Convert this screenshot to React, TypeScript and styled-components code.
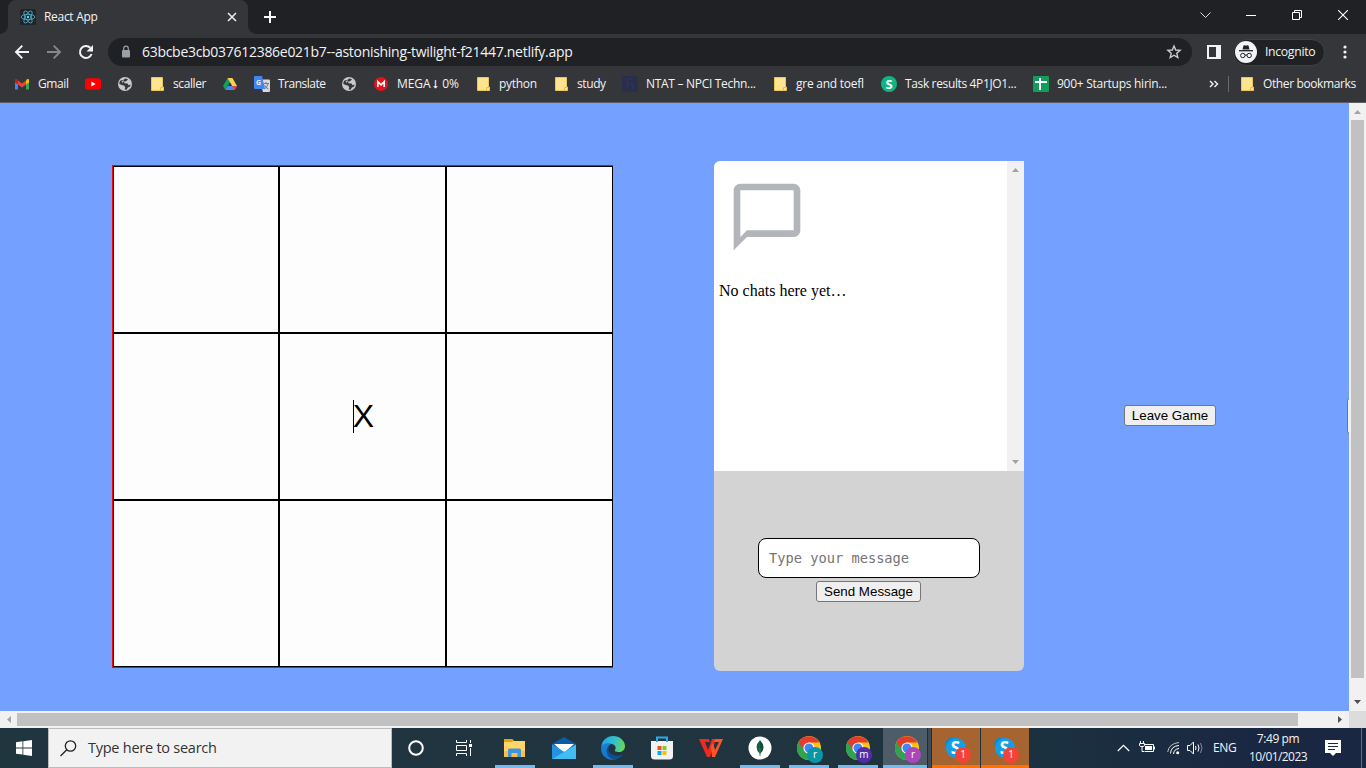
import React from 'react';
import styled, { createGlobalStyle, css } from 'styled-components';

const GlobalStyle = createGlobalStyle`
  * { box-sizing: border-box; }
  body { margin: 0; overflow: hidden; }
  svg { display: block; flex: none; }
`;

const ui = css`font-family: "Open Sans", "Noto Sans", sans-serif;`;

const Screen = styled.div`
  width: 1366px; height: 768px; overflow: hidden;
  display: flex; flex-direction: column;
  ${ui}
`;

/* ---------- browser frame ---------- */
const TabStrip = styled.div`
  height: 34px; background: #202124; display: flex; align-items: stretch; padding-left: 8px; flex: none;
`;
const Tab = styled.div`
  width: 240px; background: #35363a; border-radius: 8px 8px 0 0;
  display: flex; align-items: center; padding: 0 11px 0 12px; position: relative;
  &::before, &::after {
    content: ''; position: absolute; bottom: 0; width: 8px; height: 8px;
  }
  &::before { left: -8px; background: radial-gradient(circle at 0 0, #202124 7.5px, #35363a 8px); }
  &::after { right: -8px; background: radial-gradient(circle at 100% 0, #202124 7.5px, #35363a 8px); }
`;
const Favicon = styled.div`
  width: 16px; height: 16px; background: #20232a; border-radius: 2px; margin-right: 8px;
`;
const Label = styled.span<{ $size?: number; $ls?: number; $w?: number; $ml?: number; $color?: string }>`
  font-size: ${p => p.$size ?? 12}px;
  letter-spacing: ${p => p.$ls ?? -0.3}px;
  ${p => p.$w && `width: ${p.$w}px;`}
  margin-left: ${p => p.$ml ?? 0}px;
  color: ${p => p.$color ?? '#f1f3f4'};
  white-space: nowrap; line-height: 16px; flex: none;
`;
const Grow = styled.div`flex: 1;`;
const NewTab = styled.div`margin-left: 15px; display: flex; align-items: center;`;
const WindowControls = styled.div`
  display: flex; align-items: flex-start; padding-top: 5px;
`;
const WindowControl = styled.div`
  width: 46px; height: 20px; display: flex; align-items: center; justify-content: center;
`;
const Toolbar = styled.div`
  height: 36px; flex: none; background: #35363a; display: flex; align-items: center; padding-left: 14px;
`;
const NavButton = styled.div`width: 32px; height: 20px; display: flex; align-items: center;`;
const AddressBar = styled.div`
  width: 1084px; height: 28px; margin-left: -2px; border-radius: 14px; background: #202124;
  display: flex; align-items: center; padding: 0 10px 0 12px;
`;
const SidePanelIcon = styled.svg`margin-left: 15px;`;
const MenuDots = styled.svg`margin-left: 18px;`;
const Incognito = styled.div`
  width: 92px; height: 27px; border-radius: 14px; background: #202124; border: 1px solid #3f4145;
  display: flex; align-items: center; padding-left: 1px; margin-left: 12px;
`;
const Bookmarks = styled.div`
  height: 33px; flex: none; background: #35363a; border-bottom: 1px solid #5c5e62;
  display: flex; align-items: center; padding: 0 0 4px 14px;
`;
const Bookmark = styled.div<{ $w: number }>`
  width: ${p => p.$w}px; flex: none; display: flex; align-items: center; gap: 8px;
`;
const Divider = styled.div`width: 1px; height: 16px; background: #67696d; margin: 0 10px 0 9px;`;

const FolderIcon = () => (
  <svg width="16" height="16" viewBox="0 0 16 16">
    <path d="M2.5 1.5h11v9.5h1v3.5h-12z" fill="#ffe490" stroke="#e8c658" />
    <path d="M11.5 14.5v-3h2.5" fill="none" stroke="#e8c040" />
  </svg>
);
const GlobeIcon = () => (
  <svg width="16" height="16" viewBox="0 0 16 16">
    <circle cx="8" cy="8" r="7" fill="#c6c9cc" />
    <path d="M3 4.800 6.200 4 8.500 2.500 11 3.200 9.500 5 7 5.800 7.600 7.200 10.500 7.600 11.500 9.200 13.600 8.600 13 10.500 11 11.500 9.500 13.800 7.600 13.600 8.300 11.500 7 9.500 4.500 9 2.200 7.800z" fill="#35363a" />
    <path d="M4.500 5.500 7 4.300 6 7z" fill="#c6c9cc" />
  </svg>
);
const GmailIcon = () => (
  <svg width="16" height="16" viewBox="0 0 16 16">
    <path d="M1 4v9.500h3V6.500z" fill="#4285f4" /><path d="M12 6.500v7h3V4z" fill="#34a853" />
    <path d="M4 4.500v4l4 3 4-3v-4l-4 3z" fill="#ea4335" />
    <path d="M1 4.200v2.200l3 2.200V4.500C2.700 2.500 1 2.800 1 4.200z" fill="#c5221f" />
    <path d="M15 4.200v2.200l-3 2.200V4.500C13.300 2.500 15 2.800 15 4.200z" fill="#fbbc04" />
  </svg>
);
const YoutubeIcon = () => (
  <svg width="16" height="16" viewBox="0 0 16 16">
    <rect y="2.200" width="16" height="11.600" rx="3" fill="#f00" /><path d="M6.400 5.600v4.800l4.200-2.400z" fill="#fff" />
  </svg>
);
const DriveIcon = () => (
  <svg width="16" height="16" viewBox="0 0 16 16">
    <path d="M5.600 2h4.800L8 6.200 3.400 14 1 10z" fill="#12a15d" />
    <path d="M5.600 2h4.800L15 10h-4.800z" fill="#ffcf48" />
    <path d="M5.700 10H15l-2.400 4H3.400z" fill="#4688f4" /><path d="M10.200 10H15l-2.400 4z" fill="#ea4335" />
  </svg>
);
const GlyphText = styled.text`
  font-family: "Open Sans", sans-serif; text-anchor: middle;
`;
const TranslateIcon = () => (
  <svg width="16" height="16" viewBox="0 0 16 16">
    <path d="M5 3.500h10q1 0 1 1V15q0 1-1 1H9z" fill="#d8dadd" />
    <path d="M9.500 7.500h5.500M12 6v1.500M14 8q-1 4-4 5M10.500 9q1 3 4 4" stroke="#727a84" fill="none" />
    <path d="M1 0h7l3 13H1q-1 0-1-1V1q0-1 1-1z" fill="#4285f4" />
    <GlyphText x="4.600" y="8.800" fontSize="7" fontWeight="700" fill="#e8f0fe">G</GlyphText>
  </svg>
);
const MegaIcon = () => (
  <svg width="16" height="16" viewBox="0 0 16 16">
    <circle cx="8" cy="8" r="7" fill="#e1141e" />
    <path d="M4.800 11V5.700L8 8.900l3.200-3.200V11" fill="none" stroke="#fff" strokeWidth="1.600" />
  </svg>
);
const NpciIcon = () => (
  <svg width="16" height="16" viewBox="0 0 16 16">
    <rect width="16" height="16" fill="#292e4a" />
    <path d="M5.500 3v10M5.500 8q5-2 5 1v4M5 3h5" stroke="#2b3562" fill="none" />
  </svg>
);
const TaskIcon = () => (
  <svg width="16" height="16" viewBox="0 0 16 16">
    <circle cx="8" cy="8" r="8" fill="#0fb583" />
    <GlyphText x="8" y="12.600" fontSize="13" fontWeight="700" fill="#fff">S</GlyphText>
  </svg>
);
const SheetIcon = () => (
  <svg width="16" height="16" viewBox="0 0 16 16">
    <rect width="16" height="16" rx="1" fill="#129e5a" />
    <path d="M7 2v12M2 6h12" stroke="#fff" strokeWidth="2" />
  </svg>
);

type BookmarkEntry = { w: number; icon: React.ReactNode; text?: string; ls?: number };
const bookmarks: BookmarkEntry[] = [
  { w: 71, icon: <GmailIcon />, text: 'Gmail', ls: -0.4 },
  { w: 32, icon: <YoutubeIcon /> },
  { w: 32, icon: <GlobeIcon /> },
  { w: 73, icon: <FolderIcon />, text: 'scaller', ls: -0.4 },
  { w: 32, icon: <DriveIcon /> },
  { w: 87, icon: <TranslateIcon />, text: 'Translate', ls: -0.5 },
  { w: 32, icon: <GlobeIcon /> },
  { w: 102, icon: <MegaIcon />, text: 'MEGA ⭣ 0%', ls: -0.1 },
  { w: 78, icon: <FolderIcon />, text: 'python' },
  { w: 69, icon: <FolderIcon />, text: 'study', ls: -0.4 },
  { w: 150, icon: <NpciIcon />, text: 'NTAT – NPCI Techn...' },
  { w: 109, icon: <FolderIcon />, text: 'gre and toefl', ls: -0.25 },
  { w: 152, icon: <TaskIcon />, text: 'Task results 4P1JO1...', ls: -0.36 },
  { w: 176, icon: <SheetIcon />, text: '900+ Startups hirin...', ls: -0.27 },
];

/* ---------- page ---------- */
const Viewport = styled.div`
  height: 625px; flex: none; display: grid; grid-template-columns: 1349px 17px; grid-template-rows: 608px 17px;
`;
const Page = styled.div`background: #74a0ff; overflow: hidden;`;
const Game = styled.div`
  width: 1500px; height: 626px; padding-left: 112px; display: flex; align-items: center;
`;
const Board = styled.div`
  width: 501px; height: 503px; margin-top: 1px; border: 1px solid #f00; border-right: 0;
  display: grid; grid-template-columns: 166px 167px 167px; grid-template-rows: repeat(3, 167px); flex: none;
`;
const Cell = styled.div`
  border: 1px solid #000; background: #fdfdfd; display: flex; align-items: center; justify-content: center;
  font: 32px/32px "Liberation Sans", Arial, sans-serif; color: #000;
`;
const Mark = styled.span`
  height: 33px; border-left: 1px solid #000; margin-left: 2px; display: block; text-indent: -1px;
`;
const Chat = styled.div`
  width: 310px; height: 510px; margin-left: 101px; flex: none; border-radius: 6px 0 6px 6px; overflow: hidden;
`;
const Messages = styled.div`height: 310px; background: #fff; display: flex;`;
const Empty = styled.div`
  flex: 1; padding: 16px 0 0 5px;
  font: 16px/18px "Liberation Serif", "Times New Roman", serif; color: #000;
`;
const BubbleWrap = styled.div`padding: 0 0 25px 8px;`;
const Composer = styled.div`
  height: 200px; background: #d3d3d3; display: flex; flex-direction: column; align-items: center; padding-top: 67px;
`;
const MessageInput = styled.input`
  width: 222px; height: 40px; border: 1px solid #000; border-radius: 8px; background: #fff; padding: 1px 10px; outline: none;
  font: 13.700px "DejaVu Sans Mono", monospace;
  &::placeholder { color: #757575; }
`;
const Button = styled.button<{ $w: number; $h?: number }>`
  width: ${p => p.$w}px; height: ${p => p.$h ?? 21}px; flex: none; padding: 0;
  font: 13.333px "Liberation Sans", Arial, sans-serif; color: #000; white-space: nowrap;
  background: #efefef; border: 1px solid #767676; border-radius: 3px;
`;
const SendButton = styled(Button)`margin: 3px 1px 0 0;`;
const LeaveButton = styled(Button)`margin: 0 0 1px 100px;`;
const NextButton = styled(Button)`margin-left: 131px;`;

const Bar = styled.div<{ $row?: boolean }>`
  background: #f1f1f1; display: flex; flex-direction: ${p => (p.$row ? 'row' : 'column')}; align-items: center;
  ${p => (p.$row ? 'height: 17px;' : 'width: 17px;')}
`;
const ArrowBox = styled.div`width: 17px; height: 17px; display: flex; align-items: center; justify-content: center; flex: none;`;
const Thumb = styled.div<{ $w: number; $h: number }>`
  width: ${p => p.$w}px; height: ${p => p.$h}px; background: #c1c1c1; flex: none;
`;
const Corner = styled.div`background: #dcdcdc;`;
const Arrow = ({ turn, color }: { turn: number; color: string }) => (
  <ArrowBox>
    <svg width="7" height="7" viewBox="0 0 7 7"><path d="M0 6 3.500 2 7 6z" fill={color} transform={`rotate(${turn} 3.5 3.5)`} /></svg>
  </ArrowBox>
);

/* ---------- taskbar ---------- */
const Taskbar = styled.div`
  height: 40px; flex: none; display: flex; background: linear-gradient(90deg, #20363f 0%, #20343f 60%, #1b3040 78%, #1a2742 92%);
`;
const Start = styled.div`width: 48px; display: flex; align-items: center; justify-content: center; padding-bottom: 1px;`;
const Search = styled.div`
  width: 344px; background: #f2f2f2; border: 1px solid #bcbcbc; display: flex; align-items: center; padding: 0 0 0 11px; gap: 11px;
`;
const TaskItem = styled.div<{ $w?: number; $bg?: string; $line?: string; $lineW?: number }>`
  width: ${p => p.$w ?? 49}px; height: 40px; flex: none; background: ${p => p.$bg ?? 'transparent'};
  display: flex; align-items: center; justify-content: center; position: relative;
  ${p => p.$line && css`
    &::after {
      content: ''; position: absolute; bottom: 0; left: 50%; height: 3px; width: ${p.$lineW ?? 40}px;
      margin-left: -${(p.$lineW ?? 40) / 2}px; background: ${p.$line};
    }
  `}
`;
const ActiveItem = styled(TaskItem)`padding-left: 5px;`;
const Badge = styled.div<{ $color: string }>`
  position: absolute; left: 23px; top: 19px; width: 16px; height: 16px; border-radius: 50%;
  background: ${p => p.$color}; color: #fff; font-size: 10px; line-height: 14px; text-align: center;
`;
const StackEdge = styled.div`width: 4px; background: #3c4b56; border-left: 1px solid #1d2d37; margin-right: 1px;`;
const AppGroup = styled.div`display: flex; padding-left: 2px;`;
const Tray = styled.div`display: flex; align-items: center; padding-left: 88px;`;
const TrayIcon = styled.svg<{ $gap: number }>`margin-left: ${p => p.$gap}px;`;
const Clock = styled.div`
  width: 70px; display: flex; flex-direction: column; align-items: center; margin-left: 7px; gap: 2px;
`;
const ShowDesktop = styled.div`width: 1px; background: #62707f; margin-right: 4px;`;

const ChromeIcon = () => (
  <svg width="24" height="24" viewBox="0 0 24 24">
    <circle cx="12" cy="12" r="12" fill="#fbc116" />
    <path d="M12 12 1.600 6A12 12 0 0 0 12 24l5-9z" fill="#31a350" />
    <path d="M1.600 6A12 12 0 0 1 22.400 6.500H12L7 14z" fill="#e33b2e" />
    <circle cx="12" cy="12" r="5.600" fill="#fff" /><circle cx="12" cy="12" r="4.500" fill="#4285f4" />
  </svg>
);
const SkypeIcon = () => (
  <svg width="24" height="24" viewBox="0 0 24 24">
    <circle cx="8" cy="8" r="6.500" fill="#0889d8" /><circle cx="16" cy="16" r="6.500" fill="#0a86d4" />
    <circle cx="12" cy="12" r="10" fill="#149ee8" />
    <GlyphText x="11.500" y="18" fontSize="17" fontWeight="700" fill="#fff">S</GlyphText>
  </svg>
);
const FileExplorerIcon = () => (
  <svg width="24" height="24" viewBox="0 0 24 24">
    <path d="M1 3h8l2 2h11v16H1z" fill="#ffd667" /><path d="M1 3h8l1.500 2L9 6H1z" fill="#e5a50e" />
    <path d="M1 15h21v6H1z" fill="#f6c14a" />
    <path d="M5 21v-7q0-1.500 1.500-1.500h10q1.500 0 1.500 1.500v7h-3.500v-4H8.500v4z" fill="#3f94de" />
  </svg>
);
const MailIcon = () => (
  <svg width="24" height="24" viewBox="0 0 24 24">
    <path d="M0 8 12 1l12 7v4H0z" fill="#0c5ba8" /><path d="M2 8h20l-10 9z" fill="#fff" />
    <path d="M0 8.500v14.500h24z" fill="#30a8ee" /><path d="M24 8.500V23H0z" fill="#42bdf4" />
    <path d="M0 8.500 12 16 0 23z" fill="#2392e0" />
  </svg>
);
const EdgeIcon = () => (
  <svg width="24" height="24" viewBox="0 0 24 24">
    <defs>
      <linearGradient id="edgeTop" x1="0" x2="1" y1=".3" y2=".5"><stop offset="0" stopColor="#2b9fe6" /><stop offset=".5" stopColor="#30bfd4" /><stop offset="1" stopColor="#67d957" /></linearGradient>
      <linearGradient id="edgeLow" x1="0" x2="0" y1="0" y2="1"><stop offset="0" stopColor="#1a80d6" /><stop offset="1" stopColor="#1672c4" /></linearGradient>
    </defs>
    <path d="M.2 11C1 4 6 0 12 0c7 0 12 5 12 10 0 4-3 6-6 6-3.500 0-4.500-1-4-2 1.500-2 .5-5-3-6C6 7 2 8 .2 11z" fill="url(#edgeTop)" />
    <path d="M.2 11C2 7 7 6.500 10 8c-3 1.500-4 6-2 9.500 2 3.500 6 5.500 9 5C10 26-1 22 .2 11z" fill="url(#edgeLow)" />
    <path d="M10 8c-4 3-3 8 1 10.500 4 2 8 1.500 11.500-.5C20 22 15 24 11.500 23 4 20.500 4 10.500 10 8z" fill="#0d4f94" />
  </svg>
);
const StoreIcon = () => (
  <svg width="24" height="24" viewBox="0 0 24 24">
    <path d="M1 5h22v15q0 3.500-3.500 3.500h-15Q1 23.500 1 20z" fill="#f2f2f2" />
    <path d="M7 6V1.500h10V6" fill="none" stroke="#28aae9" strokeWidth="2" />
    <path d="M7.500 10h4v4h-4z" fill="#f1511b" /><path d="M12.500 10h4v4h-4z" fill="#80cc28" />
    <path d="M7.500 15h4v4h-4z" fill="#00adef" /><path d="M12.500 15h4v4h-4z" fill="#fbbc09" />
  </svg>
);
const WpsIcon = () => (
  <svg width="24" height="24" viewBox="0 0 24 24">
    <path d="M0 3h10l1 3H6l3 8 4-11h4l-6 18H8z" fill="#f3291d" />
    <path d="M12 10l2-3 2 7 4-8h-5l1-3h8l-8 18h-3z" fill="#ff5429" />
  </svg>
);
const MongoIcon = () => (
  <svg width="24" height="24" viewBox="0 0 24 24">
    <circle cx="12" cy="12" r="11.500" fill="#fff" />
    <path d="M12 4q-7 7.500 0 14z" fill="#116149" /><path d="M12 4q7 7.500 0 14z" fill="#0b4f3a" /><path d="M12 12v8" stroke="#4a7963" />
  </svg>
);

export default function App() {
  return (
    <Screen>
      <GlobalStyle />
      <TabStrip>
        <Tab>
          <Favicon>
            <svg width="16" height="16" viewBox="0 0 16 16" fill="none" stroke="#50b7d2" strokeWidth=".8">
              <ellipse cx="8" cy="8" rx="6.800" ry="2.700" />
              <ellipse cx="8" cy="8" rx="6.800" ry="2.700" transform="rotate(60 8 8)" />
              <ellipse cx="8" cy="8" rx="6.800" ry="2.700" transform="rotate(120 8 8)" />
              <circle cx="8" cy="8" r="1.200" fill="#61dafb" stroke="none" />
            </svg>
          </Favicon>
          <Label>React App</Label>
          <Grow />
          <svg width="10" height="10" viewBox="0 0 10 10" stroke="#e8eaed" strokeWidth="1.600"><path d="m1 1 8 8M9 1 1 9" /></svg>
        </Tab>
        <NewTab>
          <svg width="14" height="14" viewBox="0 0 14 14" stroke="#fff" strokeWidth="2"><path d="M7 1v12M1 7h12" /></svg>
        </NewTab>
        <Grow />
        <WindowControls>
          <WindowControl><svg width="11" height="7" viewBox="0 0 11 7" fill="none" stroke="#dadce0"><path d="m.5.5 5 5 5-5" /></svg></WindowControl>
          <WindowControl><svg width="10" height="1" viewBox="0 0 10 1"><path d="M0 0h10v1H0z" fill="#fff" /></svg></WindowControl>
          <WindowControl><svg width="10" height="10" viewBox="0 0 10 10" fill="none" stroke="#fff"><path d="M.5 2.500h7v7h-7zM2.500 2.500v-2h7v7h-2" /></svg></WindowControl>
          <WindowControl><svg width="10" height="10" viewBox="0 0 10 10" stroke="#fff" strokeWidth="1.100"><path d="m0 0 10 10M10 0 0 10" /></svg></WindowControl>
        </WindowControls>
      </TabStrip>

      <Toolbar>
        <NavButton><svg width="16" height="16" viewBox="0 0 16 16" fill="none" stroke="#f1f3f4" strokeWidth="1.900"><path d="M15 8H2.500M8.300 1.700 2 8l6.300 6.300" /></svg></NavButton>
        <NavButton><svg width="16" height="16" viewBox="0 0 16 16" fill="none" stroke="#85878a" strokeWidth="1.900"><path d="M1 8h12.500M7.700 1.700 14 8l-6.300 6.300" /></svg></NavButton>
        <NavButton>
          <svg width="16" height="16" viewBox="0 0 16 16" fill="none" stroke="#f1f3f4" strokeWidth="2"><path d="M13.600 10A6 6 0 1 1 12.300 3.800" /><path d="M15 1v6.500H8.500z" fill="#f1f3f4" stroke="none" /></svg>
        </NavButton>
        <AddressBar>
          <svg width="12" height="14" viewBox="0 0 12 14"><rect x="2" y="5" width="8" height="7.500" rx="1" fill="#9aa0a6" /><path d="M3.700 5.500V3.500a2.300 2.300 0 0 1 4.600 0v2" fill="none" stroke="#9aa0a6" strokeWidth="1.200" /></svg>
          <Label $size={14} $ls={-0.29} $ml={10}>63bcbe3cb037612386e021b7--astonishing-twilight-f21447.netlify.app</Label>
          <Grow />
          <svg width="16" height="16" viewBox="0 0 16 16" fill="none" stroke="#c9ccd0" strokeWidth="1.400"><path d="m8 2 1.700 4 4.400.4-3.300 2.900 1 4.200L8 11.200l-3.800 2.300 1-4.200-3.300-2.900 4.400-.4z" /></svg>
        </AddressBar>
        <SidePanelIcon width="14" height="14" viewBox="0 0 14 14"><path fillRule="evenodd" fill="#f1f3f4" d="M0 0h14v14H0zM2 2v10h7V2z" /></SidePanelIcon>
        <Incognito>
          <svg width="22" height="22" viewBox="0 0 22 22" fill="none">
            <circle cx="11" cy="11" r="11" fill="#f1f3f4" />
            <path d="m7.500 8.500 1-4 1.300-.3 1.200.5 1.200-.5 1.300.3 1 4z" fill="#202124" /><path d="M4 9.700h14" stroke="#202124" strokeWidth="1.300" />
            <circle cx="7.800" cy="14.500" r="2.200" stroke="#202124" /><circle cx="14.200" cy="14.500" r="2.200" stroke="#202124" /><path d="M10 14.200q1-.6 2 0" stroke="#202124" />
          </svg>
          <Label $size={12.3} $ls={-0.35} $ml={8}>Incognito</Label>
        </Incognito>
        <MenuDots width="4" height="16" viewBox="0 0 4 16" fill="#f1f3f4"><circle cx="2" cy="3" r="1.600" /><circle cx="2" cy="8" r="1.600" /><circle cx="2" cy="13" r="1.600" /></MenuDots>
      </Toolbar>

      <Bookmarks>
        {bookmarks.map((b, i) => (
          <Bookmark key={i} $w={b.w}>{b.icon}{b.text && <Label $ls={b.ls}>{b.text}</Label>}</Bookmark>
        ))}
        <svg width="10" height="8" viewBox="0 0 10 8" fill="none" stroke="#e8eaed" strokeWidth="1.500"><path d="m1 1 3 3-3 3M5.500 1l3 3-3 3" /></svg>
        <Divider />
        <Bookmark $w={126}><FolderIcon /><Label $ls={-0.38}>Other bookmarks</Label></Bookmark>
      </Bookmarks>

      <Viewport>
        <Page>
          <Game>
            <Board>
              {['', '', '', '', 'X', '', '', '', ''].map((v, i) => <Cell key={i}>{v && <Mark>{v}</Mark>}</Cell>)}
            </Board>
            <Chat>
              <Messages>
                <Empty>
                  <BubbleWrap>
                    <svg width="80" height="80" viewBox="0 0 24 24" fill="#b2b6bb"><path d="M20 2H4c-1.100 0-2 .9-2 2v18l4-4h14c1.100 0 2-.9 2-2V4c0-1.100-.9-2-2-2zm0 14H6l-2 2V4h16v12z" /></svg>
                  </BubbleWrap>
                  No chats here yet…
                </Empty>
                <Bar><Arrow turn={0} color="#a3a3a3" /><Grow /><Arrow turn={180} color="#a3a3a3" /></Bar>
              </Messages>
              <Composer>
                <MessageInput placeholder="Type your message" />
                <SendButton $w={105}>Send Message</SendButton>
              </Composer>
            </Chat>
            <LeaveButton $w={92}>Leave Game</LeaveButton>
            <NextButton $w={92} $h={36} />
          </Game>
        </Page>
        <Bar><Arrow turn={0} color="#a3a3a3" /><Thumb $w={13} $h={558} /><Grow /><Arrow turn={180} color="#505050" /></Bar>
        <Bar $row><Arrow turn={-90} color="#a3a3a3" /><Thumb $w={1281} $h={13} /><Grow /><Arrow turn={90} color="#505050" /></Bar>
        <Corner />
      </Viewport>

      <Taskbar>
        <Start><svg width="16" height="16" viewBox="0 0 16 16" fill="#fff"><path d="M0 2.200 6.500 1.300v6.200H0zM7.300 1.200 16 0v7.500H7.300zM0 8.400h6.500v6.200L0 13.700zM7.300 8.400H16V16l-8.700-1.200z" /></svg></Start>
        <Search>
          <svg width="17" height="17" viewBox="0 0 17 17" fill="none" stroke="#222" strokeWidth="1.300"><circle cx="10.500" cy="6" r="5.200" /><path d="M6.800 9.700.500 16" /></svg>
          <Label $size={14.5} $ls={-0.25} $color="#333">Type here to search</Label>
        </Search>
        <TaskItem $w={48}><svg width="16" height="16" viewBox="0 0 16 16"><circle cx="8" cy="8" r="6.800" fill="none" stroke="#fff" strokeWidth="2" /></svg></TaskItem>
        <TaskItem $w={48}>
          <svg width="16" height="16" viewBox="0 0 16 16" fill="none" stroke="#fff"><path d="M.5 0v2.500h10V0M.5 5.500h10v5H.5zM.5 16v-2.500h10V16M14.500 0v3M14.500 8v8" /><path d="M13 4h3v3h-3z" fill="#fff" stroke="none" /></svg>
        </TaskItem>
        <AppGroup>
          <TaskItem $line="#76b9ed"><FileExplorerIcon /></TaskItem>
          <TaskItem><MailIcon /></TaskItem>
          <TaskItem $line="#76b9ed"><EdgeIcon /></TaskItem>
          <TaskItem><StoreIcon /></TaskItem>
          <TaskItem><WpsIcon /></TaskItem>
          <TaskItem $line="#76b9ed"><MongoIcon /></TaskItem>
          <TaskItem $line="#76b9ed"><ChromeIcon /><Badge $color="#0797a7">r</Badge></TaskItem>
          <TaskItem $line="#76b9ed"><ChromeIcon /><Badge $color="#512da8">m</Badge></TaskItem>
          <ActiveItem $w={45} $bg="linear-gradient(90deg, #20343f 1px, #4d5c66 1px)" $line="#76b9ed" $lineW={44}><ChromeIcon /><Badge $color="#ab47bc">r</Badge></ActiveItem>
          <StackEdge />
          <TaskItem $w={48} $bg="#a66530" $line="#ff7200" $lineW={48}><SkypeIcon /><Badge $color="#f44336">1</Badge></TaskItem>
          <TaskItem $w={49} $bg="linear-gradient(90deg, #20343f 1px, #a66530 1px)" $line="#ff7200" $lineW={48}><SkypeIcon /><Badge $color="#f44336">1</Badge></TaskItem>
        </AppGroup>
        <Tray>
          <svg width="13" height="8" viewBox="0 0 13 8" fill="none" stroke="#fff" strokeWidth="1.200"><path d="m.8 7 5.700-5.700L12.200 7" /></svg>
          <TrayIcon $gap={9} width="16" height="14" viewBox="0 0 16 14" fill="none" stroke="#fff"><path d="M5 3.500h9.500v7h-9M1.500 0v2M4.500 0v2M.5 2.500h5v2q0 1-2.500 1-2.500 0-2.500-1zM3 5.500v5h2M15.500 5.500v3" /><path d="M6 5h7v4H6z" fill="#fff" stroke="none" /></TrayIcon>
          <TrayIcon $gap={12} width="14" height="14" viewBox="0 0 14 14" fill="none" stroke="#fff"><path d="M.7 11Q2 2.500 12 1.500" opacity=".7" /><path d="M3.500 12.500Q4 5 12 4.500M6.500 13Q7 8 12 7.500" /><circle cx="10.700" cy="11.700" r="1.500" fill="#fff" stroke="none" /></TrayIcon>
          <TrayIcon $gap={6} width="17" height="14" viewBox="0 0 17 14" fill="none" stroke="#fff"><path d="M.5 4.500H3L6.500 1v12L3 9.500H.5zM8.500 5q1 2 0 4" /><path d="M11 3.500q2 3.500 0 7" /><path d="M13.500 2q3 5 0 10" opacity=".45" /></TrayIcon>
          <Label $size={12} $ml={9} $w={23}>ENG</Label>
          <Clock><Label $ls={-0.4}>7:49 pm</Label><Label $ls={-0.58}>10/01/2023</Label></Clock>
          <TrayIcon $gap={12} width="16" height="16" viewBox="0 0 16 16"><path d="M0 0h16v13h-5l-3 3-3-3H0z" fill="#fff" /><path d="M3 3.500h10M3 6.500h10M3 9.500h7" stroke="#1a2742" /></TrayIcon>
        </Tray>
        <Grow />
        <ShowDesktop />
      </Taskbar>
    </Screen>
  );
}
